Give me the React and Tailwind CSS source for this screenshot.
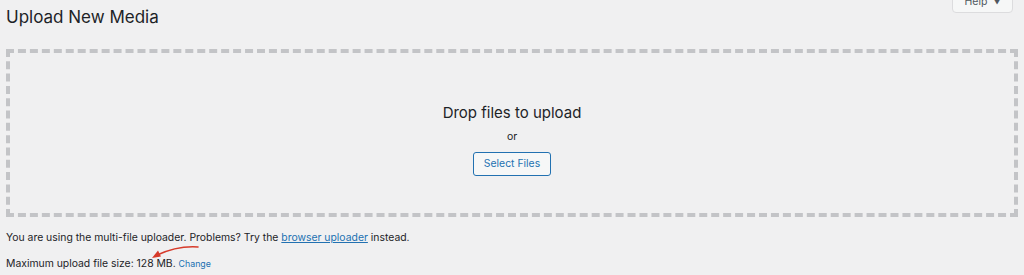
import React from "react";

const App = () => {
  return (
    <div className="w-[1024px] h-[275px] overflow-hidden bg-[#f0f0f1] text-[#1d2327] font-['Inter',sans-serif] relative">
      {/* Help tab */}
      <div className="absolute right-[11px] top-[-8px] w-[61px] h-[21px] bg-[#f6f7f7] border border-[#dcdcde] rounded-b-[4px] flex items-end justify-center pb-[2px] text-[10.5px] text-[#50575e]">
        <span>Help</span>
        <span className="ml-[6px] text-[7px] mb-[2px]">▼</span>
      </div>

      <div className="px-[6px] pt-[5px]">
        <h1 className="text-[17px] leading-[24px] font-normal">Upload New Media</h1>

        <div className="mt-[20px] h-[168px] border-4 border-dashed border-[#c3c4c7] flex flex-col items-center justify-center pt-[12px]">
          <p className="text-[15px] leading-[20px]">Drop files to upload</p>
          <p className="text-[10.5px] leading-[14px] mt-[7px]">or</p>
          <button className="mt-[8px] h-[24px] px-[10px] border border-[#2271b1] rounded-[3px] bg-[#f6f7f7] text-[#2271b1] text-[10.4px]">
            Select Files
          </button>
        </div>

        <p className="mt-[13px] text-[10.4px] leading-[16px]">
          You are using the multi-file uploader. Problems? Try the{" "}
          <a className="text-[#2271b1] underline">browser uploader</a> instead.
        </p>
        <p className="mt-[10px] text-[10.4px] leading-[16px]">
          Maximum upload file size: 128 MB.{" "}
          <a className="text-[#2271b1] text-[8.8px]">Change</a>
        </p>
      </div>

      {/* annotation arrow */}
      <svg className="absolute left-[148px] top-[243px]" width="56" height="18" viewBox="0 0 56 18" fill="none">
        <path d="M50 4 C 36 3, 22 6, 8 12.5" stroke="#d63a2a" strokeWidth="1.6" strokeLinecap="round" />
        <path d="M4 15 L 13 13.5 L 10 7.5 Z" fill="#d63a2a" />
      </svg>
    </div>
  );
};

export default App;
